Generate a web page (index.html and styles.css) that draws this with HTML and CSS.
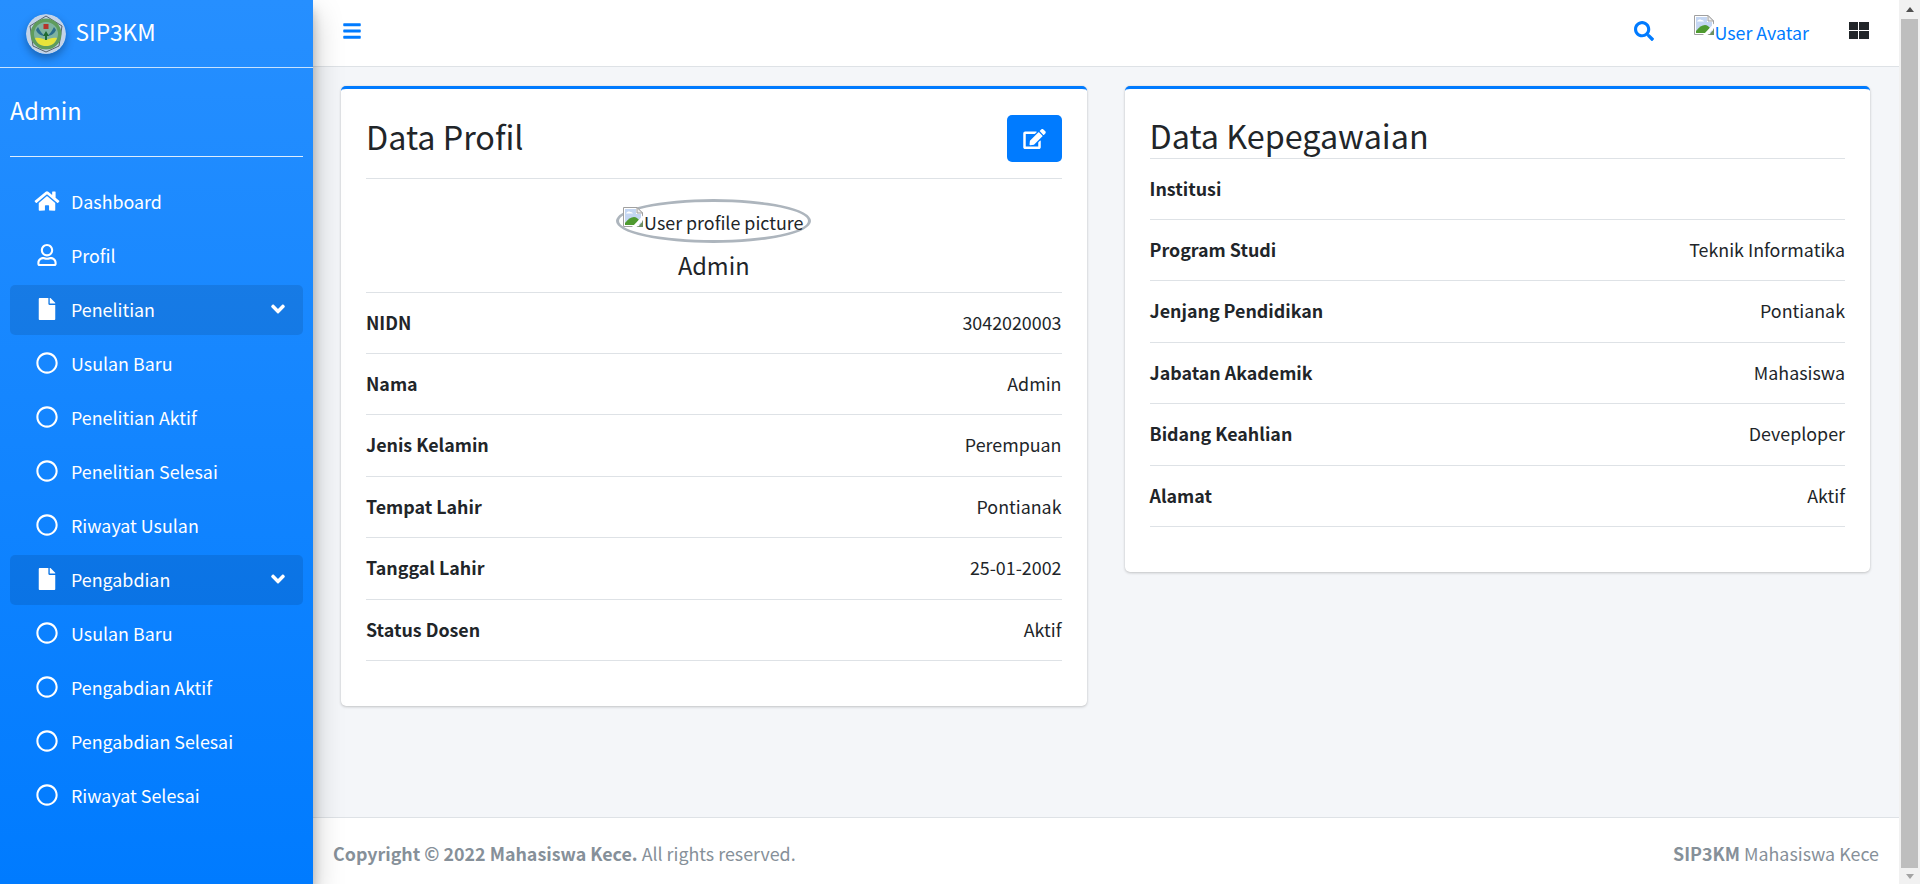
FILE: index.html
```html
<!DOCTYPE html>
<html lang="id">
<head>
<meta charset="utf-8">
<title>SIP3KM</title>
<link rel="stylesheet" href="styles.css">
</head>
<body>
<svg class="defs" width="0" height="0" aria-hidden="true">
  <symbol id="broken" viewBox="0 0 20 20">
    <path d="M.5.5h13.500l5.500 5.500v13.500H.5z" fill="#fff" stroke="#a0a0a0"/>
    <path d="M2 2h11v5h5v11H2z" fill="#c4d6f2"/>
    <path d="M3 6.500c1-2 3-2.500 4.500-1.500 1 0 2 .5 2.500 1.500z" fill="#fff"/>
    <path d="M2 18v-2c3-4 6-6 9-6 2 0 4 1.500 5 3l-4 5z" fill="#4f9a30"/>
    <path d="M14 .5v5.500h5.500z" fill="#efefef" stroke="#a0a0a0"/>
    <path d="M20 8.500 9 20h4.500L20 13z" fill="#fff"/>
    <path d="M20 14v6h-5z" fill="#6f8f62"/>
  </symbol>
  <symbol id="i-circle" viewBox="0 0 512 512"><path d="M256 8C119 8 8 119 8 256s111 248 248 248 248-111 248-248S393 8 256 8zm0 448c-110.500 0-200-89.500-200-200S145.500 56 256 56s200 89.500 200 200-89.500 200-200 200z"/></symbol>
  <symbol id="i-file" viewBox="0 0 384 512"><path d="M224 136V0H24C10.700 0 0 10.700 0 24v464c0 13.300 10.700 24 24 24h336c13.300 0 24-10.700 24-24V160H248c-13.200 0-24-10.800-24-24zm160-14.100v6.100H256V0h6.100c6.400 0 12.500 2.500 17 7l97.900 98c4.500 4.500 7 10.600 7 16.900z"/></symbol>
  <symbol id="i-down" viewBox="0 0 320 512"><path d="M143 352.300L7 216.300c-9.400-9.400-9.400-24.600 0-33.900l22.600-22.600c9.400-9.400 24.600-9.400 33.900 0l96.400 96.400 96.400-96.400c9.400-9.400 24.600-9.400 33.900 0l22.600 22.600c9.400 9.400 9.400 24.600 0 33.900l-136 136c-9.200 9.400-24.400 9.400-33.800 0z"/></symbol>
</svg>
<div class="app">
  <aside class="sidebar">
    <a class="brand">
      <svg class="logo" viewBox="0 0 40 40" aria-hidden="true">
        <circle cx="20" cy="20" r="20" fill="#c3d3e8"/>
        <path d="M20 2 36 12 33 32 20 38 7 32 4 12z" fill="none" stroke="#55626b" stroke-width="1"/>
        <circle cx="20" cy="20" r="15.500" fill="#5f9c5c"/>
        <circle cx="20" cy="20" r="12" fill="#7fb3a0"/>
        <path d="M9 24c4-1 8 1 11 2 3-1 7-3 11-2-2 6-6 8-11 8s-9-2-11-8z" fill="#e8e33a"/>
        <path d="M12 13c2 4 4 7 7 9-4 0-8-3-9-6zM28 13c-2 4-4 7-7 9 4 0 8-3 9-6z" fill="#2d6d8a"/>
        <rect x="17.500" y="10" width="5" height="5" fill="#b5342c"/>
        <path d="M20 17l3 5h-2v4h-2v-4h-2z" fill="#1f6b32"/>
      </svg>
      <span class="brand-text">SIP3KM</span>
    </a>
    <div class="sidebar-body">
      <div class="user-panel">Admin</div>
      <nav class="nav">
        <a class="nav-link"><svg class="nav-icon home" viewBox="0 0 576 512"><path d="M280.370 148.260L96 300.110V464a16 16 0 0 0 16 16l112.060-.29a16 16 0 0 0 15.920-16V368a16 16 0 0 1 16-16h64a16 16 0 0 1 16 16v95.640a16 16 0 0 0 16 16.050L464 480a16 16 0 0 0 16-16V300L295.670 148.260a12.190 12.190 0 0 0-15.300 0zM571.600 251.470L488 182.560V44.050a12 12 0 0 0-12-12h-56a12 12 0 0 0-12 12v72.610L318.470 43a48 48 0 0 0-61 0L4.340 251.470a12 12 0 0 0-1.600 16.900l25.500 31A12 12 0 0 0 45.150 301l235.220-193.740a12.190 12.190 0 0 1 15.300 0L530.900 301a12 12 0 0 0 16.900-1.600l25.500-31a12 12 0 0 0-1.700-16.930z"/></svg><span>Dashboard</span></a>
        <a class="nav-link"><svg class="nav-icon" viewBox="0 0 448 512"><path d="M313.600 304c-28.700 0-42.500 16-89.600 16-47.100 0-60.800-16-89.600-16C60.200 304 0 364.200 0 438.400V464c0 26.500 21.500 48 48 48h352c26.500 0 48-21.500 48-48v-25.600c0-74.200-60.200-134.400-134.400-134.400zM400 464H48v-25.600c0-47.600 38.800-86.400 86.400-86.400 14.600 0 38.300 16 89.600 16 51.700 0 74.900-16 89.600-16 47.600 0 86.400 38.800 86.400 86.400V464zM224 288c79.500 0 144-64.500 144-144S303.500 0 224 0 80 64.500 80 144s64.500 144 144 144zm0-240c52.900 0 96 43.100 96 96s-43.100 96-96 96-96-43.100-96-96 43.100-96 96-96z"/></svg><span>Profil</span></a>
        <a class="nav-link open"><svg class="nav-icon"><use href="#i-file"/></svg><span>Penelitian</span><svg class="chev"><use href="#i-down"/></svg></a>
        <a class="nav-link"><svg class="nav-icon"><use href="#i-circle"/></svg><span>Usulan Baru</span></a>
        <a class="nav-link"><svg class="nav-icon"><use href="#i-circle"/></svg><span>Penelitian Aktif</span></a>
        <a class="nav-link"><svg class="nav-icon"><use href="#i-circle"/></svg><span>Penelitian Selesai</span></a>
        <a class="nav-link"><svg class="nav-icon"><use href="#i-circle"/></svg><span>Riwayat Usulan</span></a>
        <a class="nav-link open"><svg class="nav-icon"><use href="#i-file"/></svg><span>Pengabdian</span><svg class="chev"><use href="#i-down"/></svg></a>
        <a class="nav-link"><svg class="nav-icon"><use href="#i-circle"/></svg><span>Usulan Baru</span></a>
        <a class="nav-link"><svg class="nav-icon"><use href="#i-circle"/></svg><span>Pengabdian Aktif</span></a>
        <a class="nav-link"><svg class="nav-icon"><use href="#i-circle"/></svg><span>Pengabdian Selesai</span></a>
        <a class="nav-link"><svg class="nav-icon"><use href="#i-circle"/></svg><span>Riwayat Selesai</span></a>
      </nav>
    </div>
  </aside>

  <div class="main">
    <header class="topbar">
      <svg class="bars" viewBox="0 0 448 512"><path d="M16 132h416c8.837 0 16-7.163 16-16V76c0-8.837-7.163-16-16-16H16C7.163 60 0 67.163 0 76v40c0 8.837 7.163 16 16 16zm0 160h416c8.837 0 16-7.163 16-16v-40c0-8.837-7.163-16-16-16H16c-8.837 0-16 7.163-16 16v40c0 8.837 7.163 16 16 16zm0 160h416c8.837 0 16-7.163 16-16v-40c0-8.837-7.163-16-16-16H16c-8.837 0-16 7.163-16 16v40c0 8.837 7.163 16 16 16z"/></svg>
      <div class="top-right">
        <svg class="search" viewBox="0 0 512 512"><path d="M505 442.700L405.300 343c-4.500-4.500-10.600-7-17-7H372c27.600-35.300 44-79.700 44-128C416 93.100 322.900 0 208 0S0 93.100 0 208s93.100 208 208 208c48.300 0 92.700-16.400 128-44v16.300c0 6.400 2.500 12.500 7 17l99.700 99.700c9.400 9.400 24.600 9.400 33.900 0l28.300-28.300c9.400-9.400 9.400-24.600.1-34zM208 336c-70.700 0-128-57.200-128-128 0-70.700 57.200-128 128-128 70.700 0 128 57.200 128 128 0 70.700-57.200 128-128 128z"/></svg>
        <a class="avatar"><svg class="broken"><use href="#broken"/></svg><span>User Avatar</span></a>
        <svg class="grid" viewBox="0 0 20 18" shape-rendering="crispEdges"><rect width="9" height="8" x="0" y="0"/><rect width="10" height="8" x="10" y="0"/><rect width="9" height="8" x="0" y="9"/><rect width="10" height="8" x="10" y="9"/></svg>
      </div>
    </header>

    <main class="content">
      <section class="card card-profile">
        <div class="card-head">
          <h3 class="title">Data Profil</h3>
          <a class="btn-edit"><svg viewBox="0 0 576 512"><path d="M402.600 83.200l90.200 90.200c3.800 3.800 3.800 10 0 13.800L274.400 405.600l-92.800 10.300c-12.400 1.400-22.900-9.100-21.500-21.500l10.300-92.800L388.800 83.200c3.800-3.800 10-3.800 13.800 0zm162-22.900l-48.800-48.800c-15.200-15.200-39.900-15.200-55.200 0l-35.400 35.400c-3.800 3.800-3.800 10 0 13.800l90.200 90.200c3.800 3.800 10 3.800 13.800 0l35.400-35.400c15.200-15.300 15.200-40 0-55.200zM384 346.200V448H64V128h229.800c3.200 0 6.200-1.300 8.500-3.500l40-40c7.600-7.600 2.200-20.500-8.500-20.500H48C21.500 64 0 85.500 0 112v352c0 26.500 21.500 48 48 48h352c26.500 0 48-21.500 48-48V306.200c0-10.700-12.900-16-20.500-8.500l-40 40c-2.200 2.300-3.500 5.300-3.500 8.500z"/></svg></a>
        </div>
        <div class="profile">
          <div class="pic"><svg class="broken"><use href="#broken"/></svg><span>User profile picture</span></div>
          <div class="profile-name">Admin</div>
        </div>
        <ul class="list">
          <li><b>NIDN</b><span>3042020003</span></li>
          <li><b>Nama</b><span>Admin</span></li>
          <li><b>Jenis Kelamin</b><span>Perempuan</span></li>
          <li><b>Tempat Lahir</b><span>Pontianak</span></li>
          <li><b>Tanggal Lahir</b><span>25-01-2002</span></li>
          <li><b>Status Dosen</b><span>Aktif</span></li>
        </ul>
      </section>
      <section class="card card-work">
        <h3 class="title">Data Kepegawaian</h3>
        <ul class="list">
          <li><b>Institusi</b><span></span></li>
          <li><b>Program Studi</b><span>Teknik Informatika</span></li>
          <li><b>Jenjang Pendidikan</b><span>Pontianak</span></li>
          <li><b>Jabatan Akademik</b><span>Mahasiswa</span></li>
          <li><b>Bidang Keahlian</b><span>Deveploper</span></li>
          <li><b>Alamat</b><span>Aktif</span></li>
        </ul>
      </section>
    </main>

    <footer class="footer">
      <div><b>Copyright © 2022 Mahasiswa Kece.</b> All rights reserved.</div>
      <div><b>SIP3KM</b> Mahasiswa Kece</div>
    </footer>
  </div>

  <div class="scrollbar" aria-hidden="true">
    <div class="sb-btn"><i class="arrow up"></i></div>
    <div class="sb-thumb"></div>
    <div class="sb-btn"><i class="arrow down"></i></div>
  </div>
</div>
</body>
</html>
```
FILE: styles.css
```css
* { box-sizing: border-box; }
html, body { margin: 0; height: 100%; overflow: hidden; }
body {
  font-family: "Noto Sans CJK SC", "Noto Sans", sans-serif;
  font-size: 17.850px;
  line-height: 30px;
  color: #212529;
  background: #f4f6f9;
}
.defs { display: block; height: 0; }
.app { display: flex; height: 884px; }

/* sidebar */
.sidebar {
  position: relative;
  z-index: 2;
  flex: 0 0 313px;
  color: #fff;
  background: linear-gradient(180deg, #268fff, #007bff);
  box-shadow: 0 14px 28px rgba(0,0,0,.25), 0 10px 10px rgba(0,0,0,.22);
}
.brand {
  display: flex;
  align-items: center;
  height: 68px;
  padding: 0 0 0 26px;
  border-bottom: 1px solid rgba(255,255,255,.75);
}
.logo {
  width: 40px;
  height: 40px;
  border-radius: 50%;
  box-shadow: 0 4px 8px rgba(0,0,0,.3);
}
.brand-text { margin-left: 9.500px; font-size: 22.700px; line-height: 34px; margin-bottom: 3px; }
.sidebar-body { padding: 0 10px; }
.user-panel {
  height: 89px;
  padding-top: 24px;
  font-size: 23.600px;
  line-height: 36px;
  border-bottom: 1px solid rgba(255,255,255,.85);
}
.nav { display: flex; flex-direction: column; gap: 4px; padding-top: 20px; }
.nav-link {
  display: flex;
  align-items: center;
  height: 50px;
  padding: 0 18px 0 23px;
  border-radius: 5px;
}
.nav-link span { margin-bottom: 2px; }
.nav-link.open { background: rgba(0,0,0,.1); }
.nav-icon { flex: 0 0 auto; width: 28px; height: 22px; margin-right: 10px; margin-bottom: 2px; fill: #fff; }
.nav-icon.home { width: 26px; margin: 0 11.500px 2px .500px; }
.chev { width: 14px; height: 22px; margin-left: auto; margin-bottom: 3px; fill: #fff; overflow: visible; }

/* main */
.main { flex: 1; min-width: 0; display: flex; flex-direction: column; }
.topbar {
  flex: 0 0 67px;
  display: flex;
  align-items: center;
  justify-content: space-between;
  padding: 0 30px 0 29.500px;
  background: #fff;
  border-bottom: 1px solid #dee2e6;
}
.bars { width: 18px; height: 20px; fill: #007bff; margin-bottom: 5px; }
.top-right { display: flex; align-items: center; }
.search { width: 20px; height: 20px; fill: #007bff; margin-right: 40px; margin-bottom: 5px; }
.avatar { display: flex; align-items: flex-start; color: #007bff; margin-right: 40px; height: 36px; }
.avatar span { line-height: 30px; margin-top: 2px; }
.broken { flex: 0 0 auto; width: 20px; height: 20px; }
.grid { width: 20px; height: 18px; fill: #212529; margin-bottom: 4px; }

/* content */
.content {
  flex: 1;
  display: flex;
  align-items: flex-start;
  gap: 38px;
  padding: 19px 29px 0 28px;
}
.card {
  flex: 1 1 0;
  padding: 25px;
  background: #fff;
  border-top: 3px solid #007bff;
  border-radius: 5px;
  box-shadow: 0 0 1px rgba(0,0,0,.125), 0 1px 3px rgba(0,0,0,.2);
}
.card-profile { padding-bottom: 45px; }
.card-work { padding-bottom: 45px; }
.card-work .title { margin-top: -1px; margin-bottom: 1px; }
.card-head { display: flex; justify-content: space-between; align-items: flex-start; padding-top: 1px; padding-bottom: 16px; }
.title { margin: 0; font-size: 32.300px; font-weight: 400; line-height: 44px; }
.card-head .title { margin-top: -1px; }
.btn-edit {
  display: flex;
  align-items: center;
  justify-content: center;
  width: 55px;
  height: 47px;
  background: #007bff;
  border-radius: 5px;
}
.btn-edit svg { width: 25px; height: 20px; fill: #fff; }
.profile { border-top: 1px solid #dee2e6; padding-top: 20px; display: flex; flex-direction: column; align-items: center; }
.pic {
  display: flex;
  align-items: flex-start;
  padding: 5px 5px 0 4px;
  height: 44px;
  border: 3px solid #adb5bd;
  border-radius: 50%;
}
.pic span { line-height: 30px; margin-top: 0; margin-left: 1px; }
.profile-name { font-size: 23.600px; line-height: 36px; margin-top: 4px; height: 45px; }
.list { list-style: none; margin: 0; padding: 0; border-bottom: 1px solid #dee2e6; }
.list li {
  display: flex;
  justify-content: space-between;
  height: 61.400px;
  padding: 14px 0;
  border-top: 1px solid #dee2e6;
}
.list li:first-child { height: 61px; }

/* footer */
.footer {
  flex: 0 0 67px;
  display: flex;
  align-items: center;
  justify-content: space-between;
  padding: 0 20px 0 20px;
  color: #869099;
  background: #fff;
  border-top: 1px solid #dee2e6;
}
.footer div { padding-top: 12px; padding-bottom: 9px; }

/* page scrollbar */
.scrollbar { flex: 0 0 21px; display: flex; flex-direction: column; align-items: center; background: #f1f1f1; }
.sb-btn { flex: 0 0 19px; width: 100%; display: flex; align-items: center; justify-content: center; }
.sb-btn:last-child { flex-basis: 16px; }
.sb-thumb { flex: 1; width: 17px; background: #bebebe; }
.arrow { width: 0; height: 0; border-left: 4.500px solid transparent; border-right: 4.500px solid transparent; }
.arrow.up { border-bottom: 5px solid #505050; }
.arrow.down { border-top: 5px solid #a3a3a3; }
```
